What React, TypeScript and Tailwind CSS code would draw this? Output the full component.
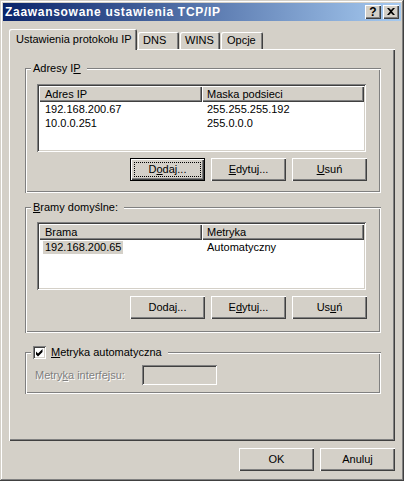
import React from 'react';

// Classic Windows 2000 bevels, drawn with inset box-shadows
const raised = 'shadow-[inset_1px_1px_0_#fff,inset_-1px_-1px_0_#404040,inset_-2px_-2px_0_#808080]';
const sunken = 'shadow-[inset_1px_1px_0_#808080,inset_-1px_-1px_0_#fff,inset_2px_2px_0_#404040,inset_-2px_-2px_0_#d4d0c8]';
const etched = 'shadow-[inset_1px_1px_0_#808080,inset_-1px_-1px_0_#fff,inset_2px_2px_0_#fff,inset_-2px_-2px_0_#808080]';
const tabEdge = 'shadow-[inset_1px_1px_0_#fff,inset_-1px_0_0_#404040,inset_-2px_0_0_#808080]';

function Btn({ children, isDefault = false }: { children: React.ReactNode; isDefault?: boolean }) {
  if (isDefault) {
    return (
      <button className={`flex w-[75px] h-[23px] p-[3px] bg-[#d4d0c8] border border-black ${raised}`}>
        <span className="flex flex-1 items-center justify-center border border-dotted border-black">{children}</span>
      </button>
    );
  }
  return (
    <button className={`flex w-[75px] h-[23px] items-center justify-center bg-[#d4d0c8] ${raised}`}>{children}</button>
  );
}

function Group({ legend, className, children }: { legend: React.ReactNode; className: string; children: React.ReactNode }) {
  return (
    <div className={`relative ${etched} ${className}`}>
      <div className="absolute left-[6px] top-[-7px] flex h-[14px] items-center bg-[#d4d0c8] pl-[2px] pr-[6px]">{legend}</div>
      {children}
    </div>
  );
}

type Row = { a: string; b: string; sel?: boolean };

function ListView({ head, rows }: { head: [string, string]; rows: Row[] }) {
  return (
    <div className={`w-[329px] h-[68px] bg-white p-[2px] ${sunken}`}>
      <div className="flex h-[16px]">
        <div className={`flex w-[163px] items-center pl-[6px] bg-[#d4d0c8] ${raised}`}>{head[0]}</div>
        <div className={`flex flex-1 items-center pl-[5px] bg-[#d4d0c8] ${raised}`}>{head[1]}</div>
      </div>
      {rows.map((r) => (
        <div key={r.a} className="flex h-[14px] items-center">
          <div className="w-[163px]">
            {r.sel ? (
              <span className="ml-[4px] inline-block h-[13px] bg-[#d4d0c8] px-[2px] leading-[13px]">{r.a}</span>
            ) : (
              <span className="pl-[6px]">{r.a}</span>
            )}
          </div>
          <div className="pl-[5px]">{r.b}</div>
        </div>
      ))}
    </div>
  );
}

export default function App() {
  return (
    <div className="w-[404px] h-[481px] flex flex-col p-[3px] bg-[#d4d0c8] text-black text-[11px] leading-[13px] font-['Liberation_Sans',Arial,sans-serif] shadow-[inset_-1px_-1px_0_#404040,inset_1px_1px_0_#d4d0c8,inset_-2px_-2px_0_#808080,inset_2px_2px_0_#fff]">
      {/* title bar */}
      <div className="flex h-[18px] items-center pr-[2px] bg-[linear-gradient(to_right,#0a246a,#a6caf0)]">
        <span className="flex-1 pl-[2px] text-[12px] font-bold tracking-[0.7px] text-white">Zaawansowane ustawienia TCP/IP</span>
        <span className={`flex w-[16px] h-[14px] items-center justify-center bg-[#d4d0c8] text-[12px] font-bold ${raised}`}>?</span>
        <span className={`ml-[2px] flex w-[16px] h-[14px] items-center justify-center bg-[#d4d0c8] ${raised}`}>
          <svg width="8" height="7" viewBox="0 0 8 7" className="-mt-px">
            <path d="M0 0h2l2 2 2-2h2L5 3.5 8 7H6L4 5 2 7H0l3-3.5z" fill="#000" />
          </svg>
        </span>
      </div>

      <div className="flex flex-col px-[6px] pt-[8px]">
        {/* tabs */}
        <div className="flex h-[20px] items-end">
          <div className={`relative z-10 -mb-px flex h-[21px] w-[128px] items-center pl-[7px] rounded-t-[2px] bg-[#d4d0c8] ${tabEdge}`}>
            Ustawienia protokołu IP
          </div>
          <div className={`ml-px flex h-[17px] w-[41px] items-center pl-[5px] rounded-t-[2px] ${tabEdge}`}>DNS</div>
          <div className={`ml-px flex h-[17px] w-[40px] items-center pl-[5px] rounded-t-[2px] ${tabEdge}`}>WINS</div>
          <div className={`ml-px flex h-[17px] w-[42px] items-center pl-[6px] rounded-t-[2px] ${tabEdge}`}>Opcje</div>
        </div>

        {/* tab page */}
        <div className={`flex h-[392px] w-[386px] flex-col pl-[16px] pt-[19px] ${raised}`}>
          <Group
            className="w-[356px] h-[125px] pl-[12px] pt-[16px]"
            legend={<span>Adresy I<u>P</u></span>}
          >
            <ListView
              head={['Adres IP', 'Maska podsieci']}
              rows={[
                { a: '192.168.200.67', b: '255.255.255.192' },
                { a: '10.0.0.251', b: '255.0.0.0' },
              ]}
            />
            <div className="mt-[6px] flex w-[330px] justify-end gap-[6px]">
              <Btn isDefault>D<u>o</u>daj...</Btn>
              <Btn><u>E</u>dytuj...</Btn>
              <Btn><u>U</u>suń</Btn>
            </div>
          </Group>

          <Group
            className="mt-[14px] w-[356px] h-[126px] pl-[12px] pt-[15px]"
            legend={<span><u>B</u>ramy domyślne:</span>}
          >
            <ListView
              head={['Brama', 'Metryka']}
              rows={[{ a: '192.168.200.65', b: 'Automatyczny', sel: true }]}
            />
            <div className="mt-[6px] flex w-[330px] justify-end gap-[6px]">
              <Btn>Doda<u>j</u>...</Btn>
              <Btn>E<u>d</u>ytuj...</Btn>
              <Btn>Us<u>u</u>ń</Btn>
            </div>
          </Group>

          <Group
            className="mt-[19px] w-[356px] h-[42px] pl-[10px] pt-[13px]"
            legend={
              <span className="flex items-center">
                <span className={`flex w-[13px] h-[13px] items-center justify-center bg-white ${sunken}`}>
                  <svg width="13" height="13" viewBox="0 0 13 13">
                    <path d="M3 5.5l2 2 4.5-4.5v3L5 10.5l-2-2z" fill="#000" />
                  </svg>
                </span>
                <span className="ml-[5px]"><u>M</u>etryka automatyczna</span>
              </span>
            }
          >
            <div className="flex h-[20px] items-center">
              <span className="w-[107px] text-[#808080] [text-shadow:1px_1px_0_#fff]">Metry<u>k</u>a interfejsu:</span>
              <span className={`w-[75px] h-[20px] bg-[#d4d0c8] ${sunken}`} />
            </div>
          </Group>
        </div>

        {/* dialog buttons */}
        <div className="mt-[7px] flex justify-end gap-[6px]">
          <Btn>OK</Btn>
          <Btn>Anuluj</Btn>
        </div>
      </div>
    </div>
  );
}
